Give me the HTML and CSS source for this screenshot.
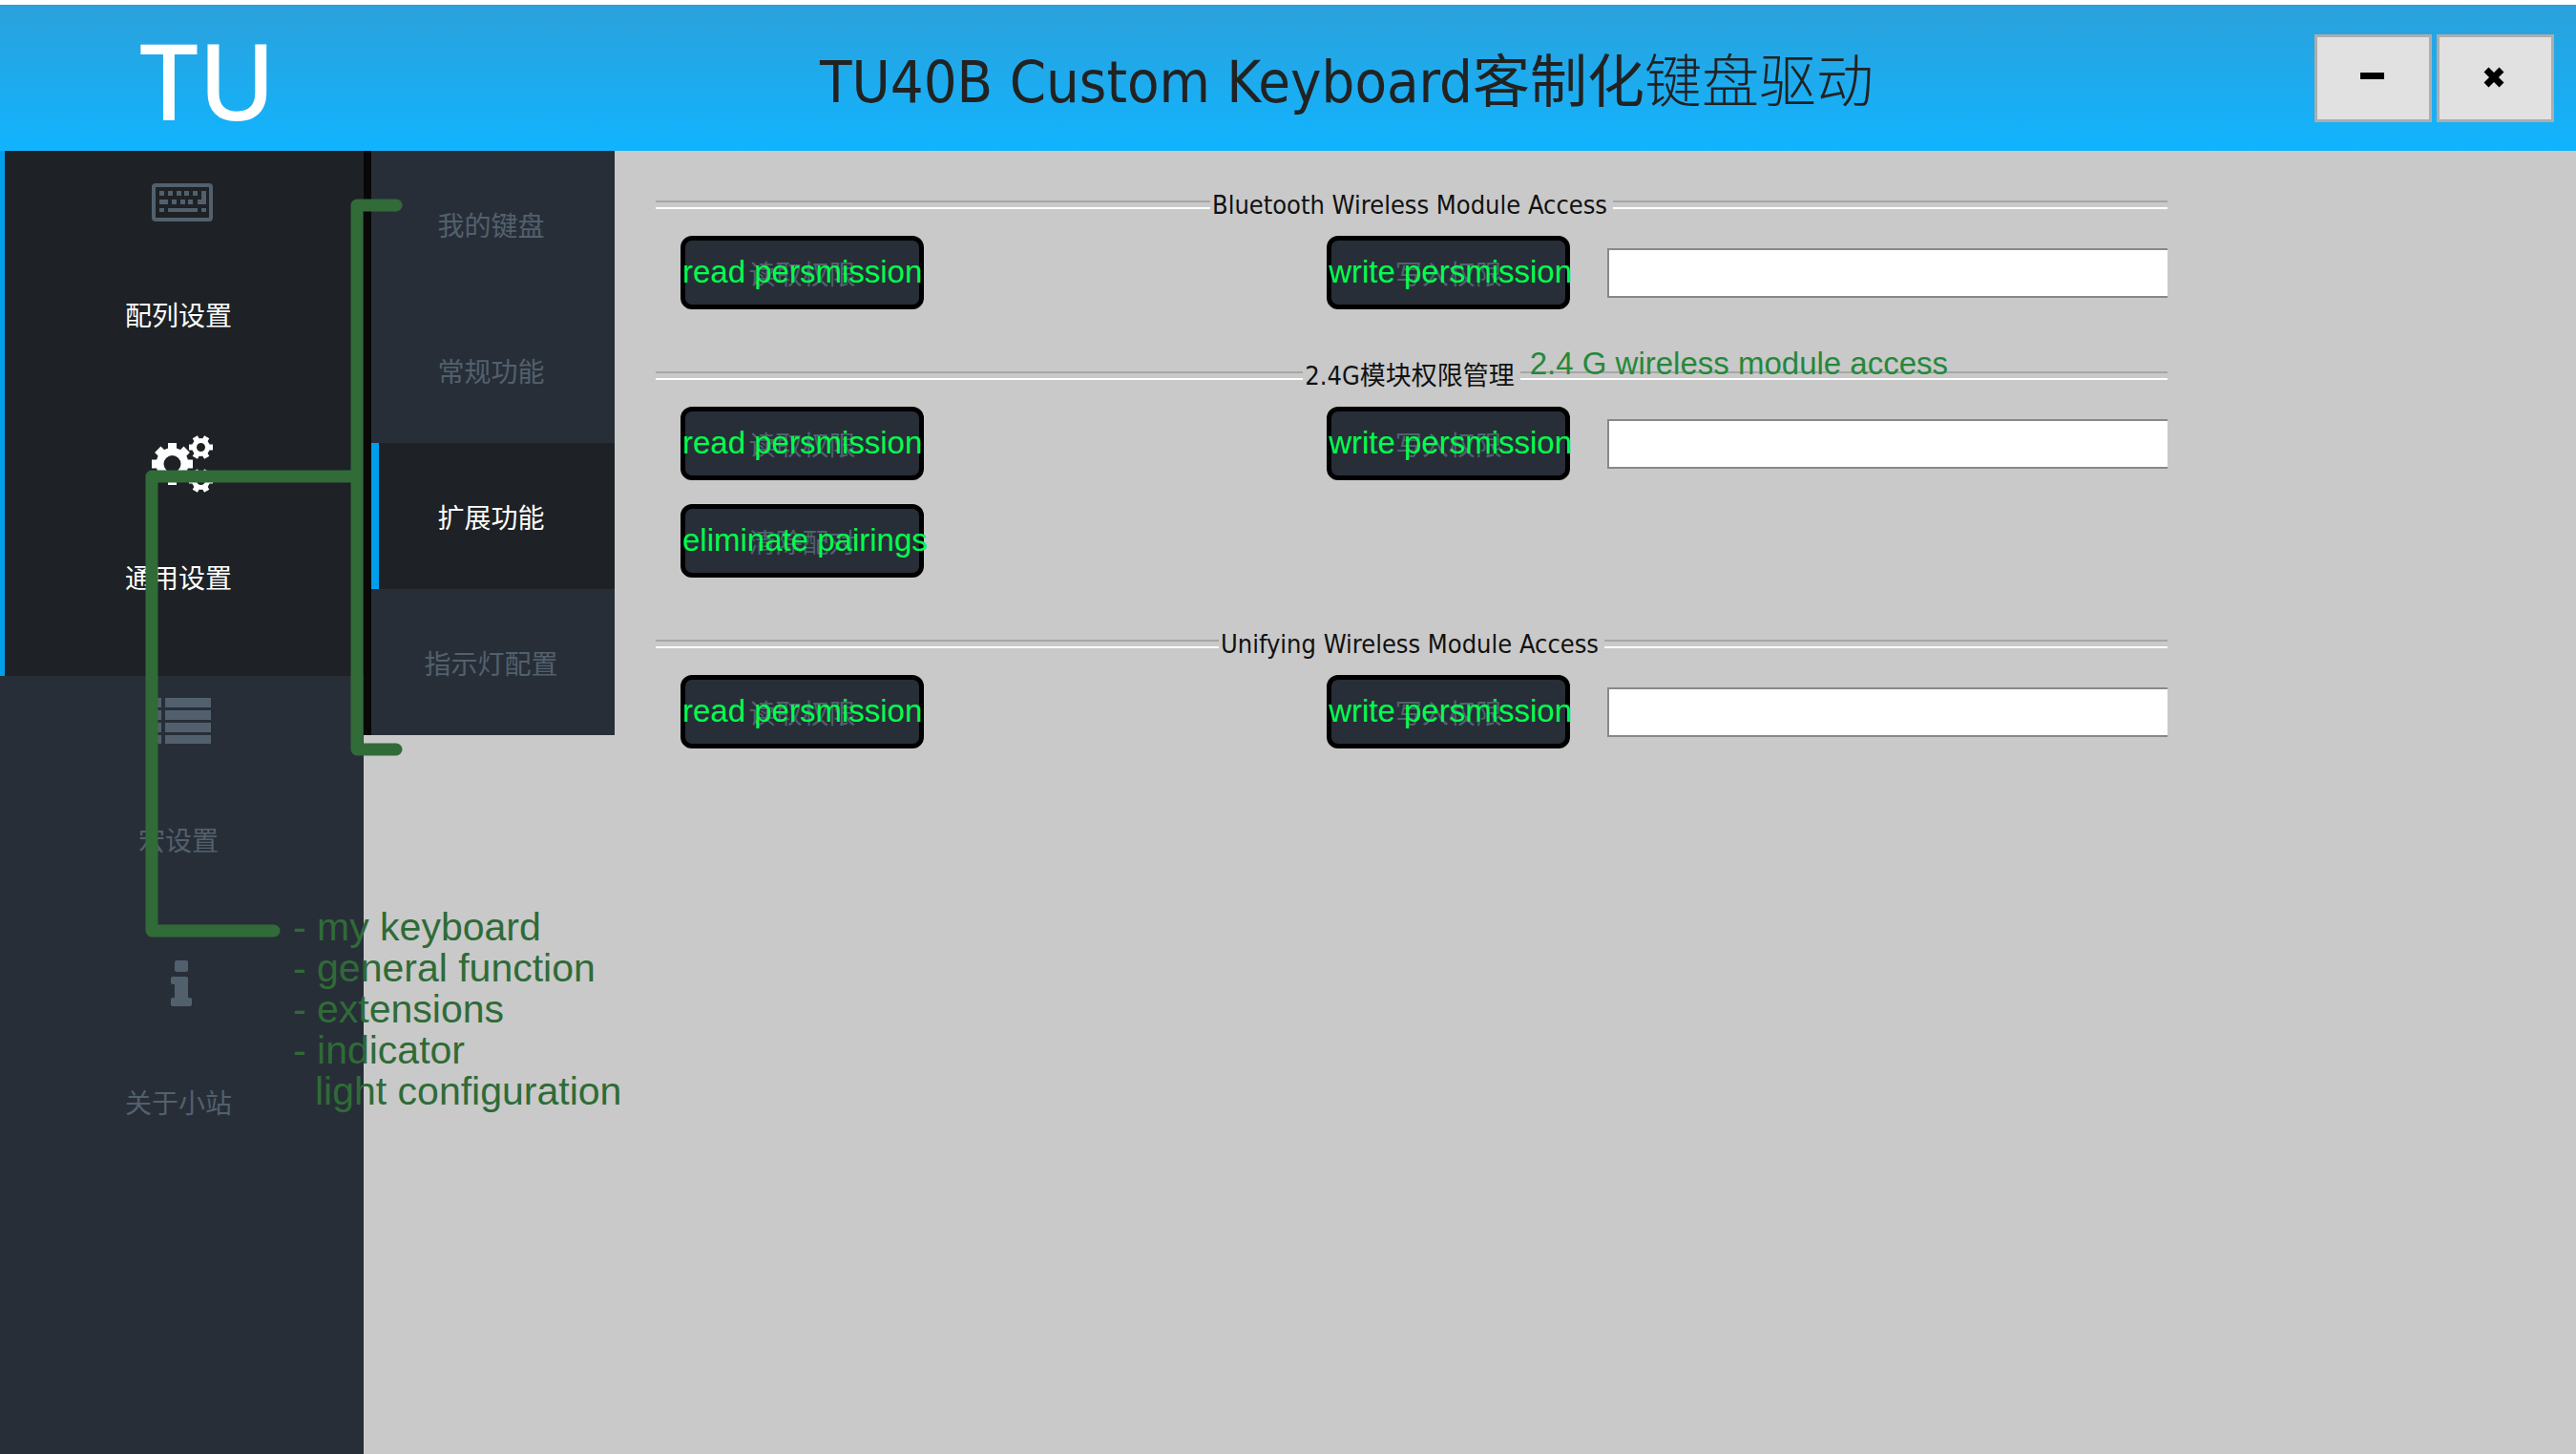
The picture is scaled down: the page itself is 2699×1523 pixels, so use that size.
FILE: index.html
```html
<!DOCTYPE html>
<html lang="zh-CN">
<head>
<meta charset="utf-8">
<meta name="viewport" content="width=device-width, initial-scale=1">
<title>TU40B Custom Keyboard</title>
<link rel="stylesheet" href="styles.css">
</head>
<body>
<div class="app">
  <header class="titlebar">
    <div class="logo">TU</div>
    <h1 class="title">TU40B Custom Keyboard<span class="title-cjk">客制化</span><span class="title-cjk thin">键盘驱动</span></h1>
    <div class="window-controls">
      <button class="window-button" type="button" aria-label="Minimize">
        <svg width="36" height="36" viewBox="0 0 36 36"><path d="M4 12h25v7H4z"/></svg>
      </button>
      <button class="window-button" type="button" aria-label="Close">
        <svg width="36" height="36" viewBox="0 0 36 36"><path d="M8 9l16 16M24 9L8 25" stroke="#000" stroke-width="7"/></svg>
      </button>
    </div>
  </header>

  <div class="body">
    <nav class="sidebar" aria-label="Main">
      <a class="side-item active" href="#layout">
        <svg class="icon dim" viewBox="0 0 64 64" fill="currentColor">
          <path fill-rule="evenodd" d="M4 12h56q4 0 4 4v32q0 4-4 4H4q-4 0-4-4V16q0-4 4-4zM4 16v32h56V16z"/>
          <path d="M8 20h5v5H8zM17 20h5v5h-5zM26 20h5v5h-5zM34 20h5v5h-5zM43 20h5v5h-5zM8 29h9v5H8zM21 29h5v5h-5zM30 29h5v5h-5zM38 29h5v5h-5zM52 20h5v14h-9v-5h4zM8 38h5v4H8zM17 38h31v4H17zM52 38h5v4h-5z"/>
        </svg>
        <span class="side-label">配列设置</span>
      </a>
      <a class="side-item active" href="#general">
        <svg class="icon" viewBox="0 1 64 64" fill="none" stroke="currentColor">
          <circle cx="21.500" cy="32" r="13" stroke-width="8"/>
          <path stroke-width="9" d="M21.500 10v7M21.500 47v7M0 32h7M36 32h7M6.300 16.800l5 5M31.700 42.200l5 5M6.300 47.200l5-5M31.700 21.800l5-5"/>
          <circle cx="51.500" cy="14.500" r="7" stroke-width="5"/>
          <path stroke-width="6" d="M39 14.500h5M59 14.500h5M45.300 3.700l2.500 4.300M55.200 21l2.500 4.300M45.300 25.300l2.500-4.300M55.200 8l2.500-4.300"/>
          <circle cx="51.500" cy="49.500" r="7" stroke-width="5"/>
          <path stroke-width="6" d="M39 49.500h5M59 49.500h5M45.300 38.700l2.500 4.300M55.200 56l2.500 4.300M45.300 60.300l2.500-4.300M55.200 43l2.500-4.300"/>
        </svg>
        <span class="side-label">通用设置</span>
      </a>
      <a class="side-item" href="#macro">
        <svg class="icon" viewBox="0 7 64 64" fill="currentColor">
          <path d="M0 8h10v10H0zM0 21h10v10H0zM0 34h10v10H0zM0 47h10v9H0zM14 8h48v10H14zM14 21h48v10H14zM14 34h48v10H14zM14 47h48v9H14z"/>
        </svg>
        <span class="side-label">宏设置</span>
      </a>
      <a class="side-item" href="#about">
        <svg class="icon" viewBox="0 7 64 64" fill="currentColor">
          <path d="M26 8h10q2 0 2 2v8q0 2-2 2H26q-2 0-2-2v-8q0-2 2-2zM22 25h14q2 0 2 2v20h2q2 0 2 2v5q0 2-2 2H22q-2 0-2-2v-5q0-2 2-2h2V33h-2q-2 0-2-2v-4q0-2 2-2z"/>
        </svg>
        <span class="side-label">关于小站</span>
      </a>
    </nav>

    <nav class="submenu" aria-label="Settings">
      <a class="sub-item" href="#my-keyboard">我的键盘</a>
      <a class="sub-item" href="#functions">常规功能</a>
      <a class="sub-item active" href="#extensions">扩展功能</a>
      <a class="sub-item" href="#indicator">指示灯配置</a>
    </nav>

    <main class="content">
      <section class="group">
        <h2 class="group-title"><span class="group-label" id="bt">Bluetooth Wireless Module Access</span></h2>
        <div class="row">
          <button class="action" type="button">读取权限<span class="note">read persmission</span></button>
          <button class="action" type="button">写入权限<span class="note">write persmission</span></button>
          <input class="field" type="text" aria-labelledby="bt">
        </div>
      </section>

      <section class="group">
        <h2 class="group-title"><span class="group-label"><span id="rf">2.4G模块权限管理</span><span class="title-note">2.4 G wireless module access</span></span></h2>
        <div class="row">
          <button class="action" type="button">读取权限<span class="note">read persmission</span></button>
          <button class="action" type="button">写入权限<span class="note">write persmission</span></button>
          <input class="field" type="text" aria-labelledby="rf">
        </div>
        <div class="row">
          <button class="action" type="button">清除配对<span class="note">eliminate pairings</span></button>
        </div>
      </section>

      <section class="group">
        <h2 class="group-title"><span class="group-label" id="uf">Unifying Wireless Module Access</span></h2>
        <div class="row">
          <button class="action" type="button">读取权限<span class="note">read persmission</span></button>
          <button class="action" type="button">写入权限<span class="note">write persmission</span></button>
          <input class="field" type="text" aria-labelledby="uf">
        </div>
      </section>
    </main>

    <svg class="bracket" width="440" height="840" viewBox="0 0 440 840" aria-hidden="true">
      <path d="M415 57H374V627H415M374 341H159V817H287"/>
    </svg>
    <ul class="legend">
      <li>- my keyboard</li>
      <li>- general function</li>
      <li>- extensions</li>
      <li>- indicator<br><span class="legend-wrap">light configuration</span></li>
    </ul>
  </div>
</div>
</body>
</html>
```
FILE: styles.css
```css
* {
  box-sizing: border-box;
}

body {
  margin: 0;
  background: #fff;
  color: #111;
  font-family: "DejaVu Sans Condensed", "Noto Sans CJK SC", sans-serif;
  font-size: 28px;
}

.app {
  display: flex;
  flex-direction: column;
  min-height: 100vh;
  padding-top: 5px;
}

/* Title bar */
.titlebar {
  display: flex;
  align-items: center;
  height: 153px;
  padding-right: 23px;
  background: linear-gradient(#2ba1db, #11b4ff);
}

.logo {
  width: 397px;
  padding: 4px 0 0 38px;
  color: #fff;
  font-family: "Noto Sans", sans-serif;
  font-size: 110px;
  font-weight: 500;
  line-height: 149px;
  text-align: center;
}

.title {
  flex: 1;
  margin: 0;
  padding-top: 4px;
  color: #222;
  font-size: 61px;
  font-weight: 400;
  line-height: 80px;
  text-align: center;
  white-space: nowrap;
}

.title-cjk {
  font-family: "Noto Sans CJK SC", sans-serif;
  font-size: 60px;
  font-weight: 400;
}

.title-cjk.thin {
  font-weight: 300;
}

.window-controls {
  display: flex;
  gap: 5px;
}

.window-button {
  display: flex;
  align-items: center;
  justify-content: center;
  width: 123px;
  height: 92px;
  padding: 0;
  border: 3px solid #adadad;
  background: #e1e1e1;
}

/* Navigation */
.body {
  position: relative;
  display: flex;
  flex: 1;
  background: #c9c9c9;
}

.sidebar {
  width: 381px;
  background: #282e38;
}

.side-item {
  display: flex;
  flex-direction: column;
  align-items: center;
  gap: 68px;
  height: 275px;
  padding: 22px 4px 0 0;
  border-left: 5px solid transparent;
  color: #52606d;
  line-height: 40px;
  text-decoration: none;
}

.side-item.active {
  border-left-color: #009fee;
  background: #1e2125;
  color: #fff;
}

.side-label {
  padding-right: 8px;
}

.icon {
  width: 64px;
  height: 64px;
}

.icon.dim {
  color: #52606d;
}

.submenu {
  align-self: flex-start;
  width: 263px;
  border-left: 8px solid #080808;
  background: #282e38;
}

.sub-item {
  display: flex;
  align-items: center;
  justify-content: center;
  height: 153px;
  padding-right: 12px;
  border-left: 8px solid transparent;
  color: #52606d;
  text-decoration: none;
}

.sub-item.active {
  border-left-color: #009fee;
  background: #1e2125;
  color: #fff;
}

/* Settings */
.content {
  display: flex;
  flex: 1;
  flex-direction: column;
  gap: 49px;
  padding: 36px 428px 36px 43px;
}

.group-title {
  display: flex;
  align-items: center;
  height: 40px;
  margin: 0 0 13px;
  font-size: 27px;
  font-weight: 400;
  line-height: 40px;
  white-space: nowrap;
}

.group-title::before,
.group-title::after {
  flex: 1;
  height: 5px;
  border-top: 2px solid #a6a6a6;
  border-bottom: 2px solid #fff;
  content: "";
}

.group-label {
  position: relative;
  padding: 2px 6px 0 2px;
}

.row {
  display: grid;
  grid-template-columns: 15fr 294px 13fr;
  align-items: center;
  padding-left: 26px;
}

.row + .row {
  margin-top: 25px;
}

.action {
  position: relative;
  width: 255px;
  height: 77px;
  padding: 0;
  border: 5px solid #000;
  border-radius: 12px;
  background: #282e38;
  color: #52606d;
  font: inherit;
}

.field {
  width: 100%;
  height: 52px;
  padding: 0 10px;
  border: 2px solid #888;
  border-right: 0;
  background: #fff;
  font: inherit;
}

/* Translation notes laid over the controls */
.note,
.title-note {
  position: absolute;
  font-family: "Liberation Sans", sans-serif;
  font-size: 33px;
  white-space: nowrap;
}

.note {
  top: 13px;
  left: -3px;
  color: #00ff4f;
  line-height: 40px;
}

.title-note {
  left: 100%;
  bottom: 13px;
  margin-left: 10px;
  color: #25883a;
  line-height: 40px;
}

.bracket {
  position: absolute;
  top: 0;
  left: 0;
  fill: none;
  stroke: #316b38;
  stroke-width: 13px;
  stroke-linecap: round;
  stroke-linejoin: round;
  pointer-events: none;
}

.legend {
  position: absolute;
  top: 792px;
  left: 307px;
  margin: 0;
  padding: 0;
  color: #2f6b37;
  font-family: "Liberation Sans", sans-serif;
  font-size: 41px;
  line-height: 43px;
  list-style: none;
  white-space: nowrap;
}

.legend-wrap {
  padding-left: 23px;
}
```
